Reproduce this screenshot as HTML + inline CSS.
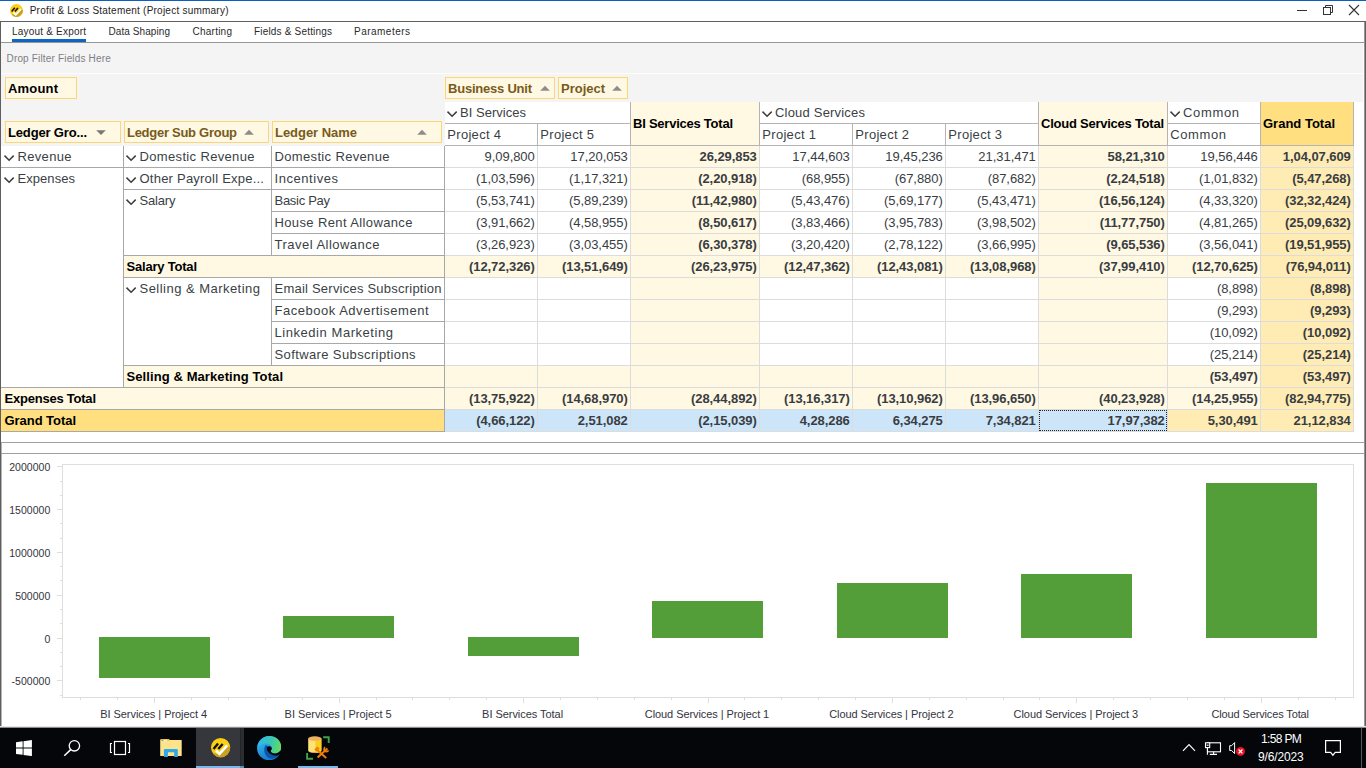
<!DOCTYPE html>
<html><head><meta charset="utf-8"><title>Profit &amp; Loss Statement</title>
<style>
html,body{margin:0;padding:0}
body{width:1366px;height:768px;overflow:hidden;position:relative;background:#fff;font-family:"Liberation Sans", sans-serif;}
div,span,svg{position:absolute;white-space:pre}
</style></head><body>
<div style="left:0px;top:0px;width:1366px;height:1px;background:#0b60bd;"></div>
<div style="left:0px;top:1px;width:1366px;height:20px;background:#fff;"></div>
<div style="left:0px;top:21px;width:1366px;height:1px;background:#5f5f5f;"></div>
<div style="left:0px;top:21px;width:1px;height:707px;background:#5f5f5f;"></div>
<div style="left:1365px;top:21px;width:1px;height:707px;background:#5f5f5f;"></div>
<div style="left:1364px;top:22px;width:1px;height:706px;background:#969696;"></div>
<div style="left:1px;top:43px;width:1px;height:684px;background:#b4b4b4;"></div>
<svg style="left:8.7px;top:2.5px" width="15.0" height="15.0" viewBox="0 0 15.0 15.0"><defs><clipPath id="c16"><circle cx="7.5" cy="7.5" r="6.5"/></clipPath></defs><circle cx="7.5" cy="7.5" r="6.5" fill="#fccf14"/><path clip-path="url(#c16)" d="M6.6 12.35L12.2 6.35L15.3 7.75L13.3 15.75L4.3 15.75L2.5 10.95z" fill="#c9a01f"/><path d="M4.4 9.45L6.8 11.75L12.0 6.05" stroke="#fff" stroke-width="1.8" fill="none"/><path d="M2.7 8.45L5.8 4.65M5.9 8.45L8.9 5.05" stroke="#151515" stroke-width="1.6" fill="none"/></svg>
<span style="top:4.54px;font-size:10px;line-height:12px;color:#1e1e1e;letter-spacing:0.232px;left:29.7px;">Profit &amp; Loss Statement (Project summary)</span>
<div style="left:1297px;top:10px;width:10px;height:1px;background:#333;"></div>
<svg style="left:1320px;top:3px" width="16" height="14" viewBox="0 0 16 14"><path d="M5.5 4.5V2.5H12.5V9.5H10.5" fill="none" stroke="#333" stroke-width="1"/><rect x="3.5" y="4.5" width="7" height="7" fill="none" stroke="#333" stroke-width="1"/></svg>
<svg style="left:1348px;top:4px" width="12" height="12" viewBox="0 0 12 12"><path d="M1 1L11 11M11 1L1 11" stroke="#333" stroke-width="1.1" fill="none"/></svg>
<span style="top:25.54px;font-size:10px;line-height:12px;color:#2a2a2a;letter-spacing:0.203px;left:12px;">Layout &amp; Export</span>
<span style="top:25.54px;font-size:10px;line-height:12px;color:#2a2a2a;letter-spacing:0.081px;left:108.5px;">Data Shaping</span>
<span style="top:25.54px;font-size:10px;line-height:12px;color:#2a2a2a;letter-spacing:0.241px;left:192.5px;">Charting</span>
<span style="top:25.54px;font-size:10px;line-height:12px;color:#2a2a2a;letter-spacing:0.185px;left:254px;">Fields &amp; Settings</span>
<span style="top:25.54px;font-size:10px;line-height:12px;color:#2a2a2a;letter-spacing:0.479px;left:354px;">Parameters</span>
<div style="left:12px;top:39px;width:74px;height:3px;background:#0c66c2;"></div>
<div style="left:1px;top:42px;width:1363px;height:1px;background:#969696;"></div>
<div style="left:1px;top:43px;width:1363px;height:103px;background:#f4f4f4;"></div>
<div style="left:1px;top:73px;width:1363px;height:1px;background:#fdfdfd;"></div>
<div style="left:1363px;top:43px;width:1px;height:103px;background:#fff;"></div>
<span style="top:52.53px;font-size:10px;line-height:12px;color:#7e7e86;letter-spacing:0.168px;left:6.5px;">Drop Filter Fields Here</span>
<div style="left:5px;top:77px;width:72px;height:22px;background:#fff8e3;box-sizing:border-box;border:1px solid #fcd675;"></div>
<span style="top:80.5px;font-size:13px;line-height:16px;color:#000;font-weight:700;letter-spacing:0.178px;left:8px;">Amount</span>
<div style="left:445px;top:77px;width:110px;height:22px;background:#fff8e3;box-sizing:border-box;border:1px solid #fcd675;"></div>
<span style="top:80.5px;font-size:13px;line-height:16px;color:#785b1c;font-weight:700;letter-spacing:-0.224px;left:448px;">Business Unit</span>
<svg style="left:539.7px;top:85px" width="10" height="7" viewBox="0 0 10 7"><path d="M0.2 5.7L5 0.8L9.8 5.7z" fill="#8c8c8c"/></svg>
<div style="left:558px;top:77px;width:70px;height:22px;background:#fff8e3;box-sizing:border-box;border:1px solid #fcd675;"></div>
<span style="top:80.5px;font-size:13px;line-height:16px;color:#785b1c;font-weight:700;letter-spacing:-0.013px;left:561px;">Project</span>
<svg style="left:612px;top:85px" width="10" height="7" viewBox="0 0 10 7"><path d="M0.2 5.7L5 0.8L9.8 5.7z" fill="#8c8c8c"/></svg>
<div style="left:5px;top:121px;width:116px;height:22px;background:#fff8e3;box-sizing:border-box;border:1px solid #fcd675;"></div>
<span style="top:124.5px;font-size:13px;line-height:16px;color:#000;font-weight:700;letter-spacing:-0.159px;left:8px;">Ledger Gro...</span>
<svg style="left:96px;top:129px" width="10" height="7" viewBox="0 0 10 7"><path d="M0.2 1.2L5 6.1L9.8 1.2z" fill="#787878"/></svg>
<div style="left:124px;top:121px;width:145px;height:22px;background:#fff8e3;box-sizing:border-box;border:1px solid #fcd675;"></div>
<span style="top:124.5px;font-size:13px;line-height:16px;color:#785b1c;font-weight:700;letter-spacing:-0.275px;left:127px;">Ledger Sub Group</span>
<svg style="left:244px;top:129px" width="10" height="7" viewBox="0 0 10 7"><path d="M0.2 5.7L5 0.8L9.8 5.7z" fill="#8c8c8c"/></svg>
<div style="left:272px;top:121px;width:170px;height:22px;background:#fff8e3;box-sizing:border-box;border:1px solid #fcd675;"></div>
<span style="top:124.5px;font-size:13px;line-height:16px;color:#785b1c;font-weight:700;letter-spacing:-0.037px;left:275px;">Ledger Name</span>
<svg style="left:417px;top:129px" width="10" height="7" viewBox="0 0 10 7"><path d="M0.2 5.7L5 0.8L9.8 5.7z" fill="#8c8c8c"/></svg>
<div style="left:445px;top:102px;width:909px;height:44px;background:#fff;"></div>
<div style="left:1px;top:146px;width:1353px;height:286px;background:#fff;"></div>
<div style="left:1354px;top:102px;width:10px;height:330px;background:#fff;"></div>
<div style="left:1px;top:432px;width:1363px;height:10px;background:#fff;"></div>
<div style="left:631px;top:102px;width:128px;height:43px;background:#fff8e3;"></div>
<span style="top:115.5px;font-size:13px;line-height:16px;color:#000;font-weight:700;letter-spacing:-0.238px;left:633px;">BI Services Total</span>
<div style="left:1039px;top:102px;width:128px;height:43px;background:#fff8e3;"></div>
<span style="top:115.5px;font-size:13px;line-height:16px;color:#000;font-weight:700;letter-spacing:-0.244px;left:1041px;">Cloud Services Total</span>
<div style="left:1261px;top:102px;width:92px;height:43px;background:#ffdf80;"></div>
<span style="top:115.5px;font-size:13px;line-height:16px;color:#000;font-weight:700;letter-spacing:0.002px;left:1263px;">Grand Total</span>
<svg style="left:445.7px;top:110px" width="12" height="8" viewBox="0 0 12 8"><path d="M1.5 1.6L6.1 6.2L10.7 1.6" fill="none" stroke="#3c3c3c" stroke-width="1.5"/></svg>
<span style="top:104.5px;font-size:13px;line-height:16px;color:#3a3f45;letter-spacing:0.025px;left:460px;">BI Services</span>
<svg style="left:760.7px;top:110px" width="12" height="8" viewBox="0 0 12 8"><path d="M1.5 1.6L6.1 6.2L10.7 1.6" fill="none" stroke="#3c3c3c" stroke-width="1.5"/></svg>
<span style="top:104.5px;font-size:13px;line-height:16px;color:#3a3f45;letter-spacing:0.197px;left:775px;">Cloud Services</span>
<svg style="left:1168.7px;top:110px" width="12" height="8" viewBox="0 0 12 8"><path d="M1.5 1.6L6.1 6.2L10.7 1.6" fill="none" stroke="#3c3c3c" stroke-width="1.5"/></svg>
<span style="top:104.5px;font-size:13px;line-height:16px;color:#3a3f45;letter-spacing:0.65px;left:1183px;">Common</span>
<span style="top:126.5px;font-size:13px;line-height:16px;color:#3a3f45;letter-spacing:0.298px;left:447.3px;">Project 4</span>
<span style="top:126.5px;font-size:13px;line-height:16px;color:#3a3f45;letter-spacing:0.298px;left:540.3px;">Project 5</span>
<span style="top:126.5px;font-size:13px;line-height:16px;color:#3a3f45;letter-spacing:0.298px;left:762.3px;">Project 1</span>
<span style="top:126.5px;font-size:13px;line-height:16px;color:#3a3f45;letter-spacing:0.298px;left:855.3px;">Project 2</span>
<span style="top:126.5px;font-size:13px;line-height:16px;color:#3a3f45;letter-spacing:0.298px;left:948.3px;">Project 3</span>
<span style="top:126.5px;font-size:13px;line-height:16px;color:#3a3f45;letter-spacing:0.59px;left:1170.3px;">Common</span>
<div style="left:445px;top:123px;width:185px;height:1px;background:#b4b4b4;"></div>
<div style="left:760px;top:123px;width:278px;height:1px;background:#b4b4b4;"></div>
<div style="left:1168px;top:123px;width:92px;height:1px;background:#b4b4b4;"></div>
<div style="left:445px;top:145px;width:909px;height:1px;background:#b4b4b4;"></div>
<div style="left:537px;top:124px;width:1px;height:21px;background:#b4b4b4;"></div>
<div style="left:852px;top:124px;width:1px;height:21px;background:#b4b4b4;"></div>
<div style="left:945px;top:124px;width:1px;height:21px;background:#b4b4b4;"></div>
<div style="left:630px;top:102px;width:1px;height:44px;background:#b4b4b4;"></div>
<div style="left:759px;top:102px;width:1px;height:44px;background:#b4b4b4;"></div>
<div style="left:1038px;top:102px;width:1px;height:44px;background:#b4b4b4;"></div>
<div style="left:1167px;top:102px;width:1px;height:44px;background:#b4b4b4;"></div>
<div style="left:1260px;top:102px;width:1px;height:44px;background:#b4b4b4;"></div>
<div style="left:1353px;top:102px;width:1px;height:44px;background:#b4b4b4;"></div>
<span style="top:148.5px;font-size:13px;line-height:16px;color:#393d42;letter-spacing:-0.05px;right:831.25px;">9,09,800</span>
<span style="top:148.5px;font-size:13px;line-height:16px;color:#393d42;letter-spacing:-0.05px;right:738.25px;">17,20,053</span>
<div style="left:631px;top:146px;width:128px;height:21px;background:#fff8e3;"></div>
<span style="top:148.5px;font-size:13px;line-height:16px;color:#393d42;font-weight:700;letter-spacing:-0.07px;right:609.27px;">26,29,853</span>
<span style="top:148.5px;font-size:13px;line-height:16px;color:#393d42;letter-spacing:-0.05px;right:516.25px;">17,44,603</span>
<span style="top:148.5px;font-size:13px;line-height:16px;color:#393d42;letter-spacing:-0.05px;right:423.25px;">19,45,236</span>
<span style="top:148.5px;font-size:13px;line-height:16px;color:#393d42;letter-spacing:-0.05px;right:330.25px;">21,31,471</span>
<div style="left:1039px;top:146px;width:128px;height:21px;background:#fff8e3;"></div>
<span style="top:148.5px;font-size:13px;line-height:16px;color:#393d42;font-weight:700;letter-spacing:-0.07px;right:201.27px;">58,21,310</span>
<span style="top:148.5px;font-size:13px;line-height:16px;color:#393d42;letter-spacing:-0.05px;right:108.25px;">19,56,446</span>
<div style="left:1261px;top:146px;width:92px;height:21px;background:#ffecb5;"></div>
<span style="top:148.5px;font-size:13px;line-height:16px;color:#393d42;font-weight:700;letter-spacing:-0.07px;right:15.27px;">1,04,07,609</span>
<span style="top:170.5px;font-size:13px;line-height:16px;color:#393d42;letter-spacing:-0.05px;right:831.25px;">(1,03,596)</span>
<span style="top:170.5px;font-size:13px;line-height:16px;color:#393d42;letter-spacing:-0.05px;right:738.25px;">(1,17,321)</span>
<div style="left:631px;top:168px;width:128px;height:21px;background:#fff8e3;"></div>
<span style="top:170.5px;font-size:13px;line-height:16px;color:#393d42;font-weight:700;letter-spacing:-0.07px;right:609.27px;">(2,20,918)</span>
<span style="top:170.5px;font-size:13px;line-height:16px;color:#393d42;letter-spacing:-0.05px;right:516.25px;">(68,955)</span>
<span style="top:170.5px;font-size:13px;line-height:16px;color:#393d42;letter-spacing:-0.05px;right:423.25px;">(67,880)</span>
<span style="top:170.5px;font-size:13px;line-height:16px;color:#393d42;letter-spacing:-0.05px;right:330.25px;">(87,682)</span>
<div style="left:1039px;top:168px;width:128px;height:21px;background:#fff8e3;"></div>
<span style="top:170.5px;font-size:13px;line-height:16px;color:#393d42;font-weight:700;letter-spacing:-0.07px;right:201.27px;">(2,24,518)</span>
<span style="top:170.5px;font-size:13px;line-height:16px;color:#393d42;letter-spacing:-0.05px;right:108.25px;">(1,01,832)</span>
<div style="left:1261px;top:168px;width:92px;height:21px;background:#ffecb5;"></div>
<span style="top:170.5px;font-size:13px;line-height:16px;color:#393d42;font-weight:700;letter-spacing:-0.07px;right:15.27px;">(5,47,268)</span>
<span style="top:192.5px;font-size:13px;line-height:16px;color:#393d42;letter-spacing:-0.05px;right:831.25px;">(5,53,741)</span>
<span style="top:192.5px;font-size:13px;line-height:16px;color:#393d42;letter-spacing:-0.05px;right:738.25px;">(5,89,239)</span>
<div style="left:631px;top:190px;width:128px;height:21px;background:#fff8e3;"></div>
<span style="top:192.5px;font-size:13px;line-height:16px;color:#393d42;font-weight:700;letter-spacing:-0.07px;right:609.27px;">(11,42,980)</span>
<span style="top:192.5px;font-size:13px;line-height:16px;color:#393d42;letter-spacing:-0.05px;right:516.25px;">(5,43,476)</span>
<span style="top:192.5px;font-size:13px;line-height:16px;color:#393d42;letter-spacing:-0.05px;right:423.25px;">(5,69,177)</span>
<span style="top:192.5px;font-size:13px;line-height:16px;color:#393d42;letter-spacing:-0.05px;right:330.25px;">(5,43,471)</span>
<div style="left:1039px;top:190px;width:128px;height:21px;background:#fff8e3;"></div>
<span style="top:192.5px;font-size:13px;line-height:16px;color:#393d42;font-weight:700;letter-spacing:-0.07px;right:201.27px;">(16,56,124)</span>
<span style="top:192.5px;font-size:13px;line-height:16px;color:#393d42;letter-spacing:-0.05px;right:108.25px;">(4,33,320)</span>
<div style="left:1261px;top:190px;width:92px;height:21px;background:#ffecb5;"></div>
<span style="top:192.5px;font-size:13px;line-height:16px;color:#393d42;font-weight:700;letter-spacing:-0.07px;right:15.27px;">(32,32,424)</span>
<span style="top:214.5px;font-size:13px;line-height:16px;color:#393d42;letter-spacing:-0.05px;right:831.25px;">(3,91,662)</span>
<span style="top:214.5px;font-size:13px;line-height:16px;color:#393d42;letter-spacing:-0.05px;right:738.25px;">(4,58,955)</span>
<div style="left:631px;top:212px;width:128px;height:21px;background:#fff8e3;"></div>
<span style="top:214.5px;font-size:13px;line-height:16px;color:#393d42;font-weight:700;letter-spacing:-0.07px;right:609.27px;">(8,50,617)</span>
<span style="top:214.5px;font-size:13px;line-height:16px;color:#393d42;letter-spacing:-0.05px;right:516.25px;">(3,83,466)</span>
<span style="top:214.5px;font-size:13px;line-height:16px;color:#393d42;letter-spacing:-0.05px;right:423.25px;">(3,95,783)</span>
<span style="top:214.5px;font-size:13px;line-height:16px;color:#393d42;letter-spacing:-0.05px;right:330.25px;">(3,98,502)</span>
<div style="left:1039px;top:212px;width:128px;height:21px;background:#fff8e3;"></div>
<span style="top:214.5px;font-size:13px;line-height:16px;color:#393d42;font-weight:700;letter-spacing:-0.07px;right:201.27px;">(11,77,750)</span>
<span style="top:214.5px;font-size:13px;line-height:16px;color:#393d42;letter-spacing:-0.05px;right:108.25px;">(4,81,265)</span>
<div style="left:1261px;top:212px;width:92px;height:21px;background:#ffecb5;"></div>
<span style="top:214.5px;font-size:13px;line-height:16px;color:#393d42;font-weight:700;letter-spacing:-0.07px;right:15.27px;">(25,09,632)</span>
<span style="top:236.5px;font-size:13px;line-height:16px;color:#393d42;letter-spacing:-0.05px;right:831.25px;">(3,26,923)</span>
<span style="top:236.5px;font-size:13px;line-height:16px;color:#393d42;letter-spacing:-0.05px;right:738.25px;">(3,03,455)</span>
<div style="left:631px;top:234px;width:128px;height:21px;background:#fff8e3;"></div>
<span style="top:236.5px;font-size:13px;line-height:16px;color:#393d42;font-weight:700;letter-spacing:-0.07px;right:609.27px;">(6,30,378)</span>
<span style="top:236.5px;font-size:13px;line-height:16px;color:#393d42;letter-spacing:-0.05px;right:516.25px;">(3,20,420)</span>
<span style="top:236.5px;font-size:13px;line-height:16px;color:#393d42;letter-spacing:-0.05px;right:423.25px;">(2,78,122)</span>
<span style="top:236.5px;font-size:13px;line-height:16px;color:#393d42;letter-spacing:-0.05px;right:330.25px;">(3,66,995)</span>
<div style="left:1039px;top:234px;width:128px;height:21px;background:#fff8e3;"></div>
<span style="top:236.5px;font-size:13px;line-height:16px;color:#393d42;font-weight:700;letter-spacing:-0.07px;right:201.27px;">(9,65,536)</span>
<span style="top:236.5px;font-size:13px;line-height:16px;color:#393d42;letter-spacing:-0.05px;right:108.25px;">(3,56,041)</span>
<div style="left:1261px;top:234px;width:92px;height:21px;background:#ffecb5;"></div>
<span style="top:236.5px;font-size:13px;line-height:16px;color:#393d42;font-weight:700;letter-spacing:-0.07px;right:15.27px;">(19,51,955)</span>
<div style="left:445px;top:256px;width:92px;height:21px;background:#fff8e3;"></div>
<span style="top:258.5px;font-size:13px;line-height:16px;color:#393d42;font-weight:700;letter-spacing:-0.07px;right:831.27px;">(12,72,326)</span>
<div style="left:538px;top:256px;width:92px;height:21px;background:#fff8e3;"></div>
<span style="top:258.5px;font-size:13px;line-height:16px;color:#393d42;font-weight:700;letter-spacing:-0.07px;right:738.27px;">(13,51,649)</span>
<div style="left:631px;top:256px;width:128px;height:21px;background:#fff8e3;"></div>
<span style="top:258.5px;font-size:13px;line-height:16px;color:#393d42;font-weight:700;letter-spacing:-0.07px;right:609.27px;">(26,23,975)</span>
<div style="left:760px;top:256px;width:92px;height:21px;background:#fff8e3;"></div>
<span style="top:258.5px;font-size:13px;line-height:16px;color:#393d42;font-weight:700;letter-spacing:-0.07px;right:516.27px;">(12,47,362)</span>
<div style="left:853px;top:256px;width:92px;height:21px;background:#fff8e3;"></div>
<span style="top:258.5px;font-size:13px;line-height:16px;color:#393d42;font-weight:700;letter-spacing:-0.07px;right:423.27px;">(12,43,081)</span>
<div style="left:946px;top:256px;width:92px;height:21px;background:#fff8e3;"></div>
<span style="top:258.5px;font-size:13px;line-height:16px;color:#393d42;font-weight:700;letter-spacing:-0.07px;right:330.27px;">(13,08,968)</span>
<div style="left:1039px;top:256px;width:128px;height:21px;background:#fff8e3;"></div>
<span style="top:258.5px;font-size:13px;line-height:16px;color:#393d42;font-weight:700;letter-spacing:-0.07px;right:201.27px;">(37,99,410)</span>
<div style="left:1168px;top:256px;width:92px;height:21px;background:#fff8e3;"></div>
<span style="top:258.5px;font-size:13px;line-height:16px;color:#393d42;font-weight:700;letter-spacing:-0.07px;right:108.27px;">(12,70,625)</span>
<div style="left:1261px;top:256px;width:92px;height:21px;background:#ffecb5;"></div>
<span style="top:258.5px;font-size:13px;line-height:16px;color:#393d42;font-weight:700;letter-spacing:-0.07px;right:15.27px;">(76,94,011)</span>
<div style="left:631px;top:278px;width:128px;height:21px;background:#fff8e3;"></div>
<div style="left:1039px;top:278px;width:128px;height:21px;background:#fff8e3;"></div>
<span style="top:280.5px;font-size:13px;line-height:16px;color:#393d42;letter-spacing:-0.05px;right:108.25px;">(8,898)</span>
<div style="left:1261px;top:278px;width:92px;height:21px;background:#ffecb5;"></div>
<span style="top:280.5px;font-size:13px;line-height:16px;color:#393d42;font-weight:700;letter-spacing:-0.07px;right:15.27px;">(8,898)</span>
<div style="left:631px;top:300px;width:128px;height:21px;background:#fff8e3;"></div>
<div style="left:1039px;top:300px;width:128px;height:21px;background:#fff8e3;"></div>
<span style="top:302.5px;font-size:13px;line-height:16px;color:#393d42;letter-spacing:-0.05px;right:108.25px;">(9,293)</span>
<div style="left:1261px;top:300px;width:92px;height:21px;background:#ffecb5;"></div>
<span style="top:302.5px;font-size:13px;line-height:16px;color:#393d42;font-weight:700;letter-spacing:-0.07px;right:15.27px;">(9,293)</span>
<div style="left:631px;top:322px;width:128px;height:21px;background:#fff8e3;"></div>
<div style="left:1039px;top:322px;width:128px;height:21px;background:#fff8e3;"></div>
<span style="top:324.5px;font-size:13px;line-height:16px;color:#393d42;letter-spacing:-0.05px;right:108.25px;">(10,092)</span>
<div style="left:1261px;top:322px;width:92px;height:21px;background:#ffecb5;"></div>
<span style="top:324.5px;font-size:13px;line-height:16px;color:#393d42;font-weight:700;letter-spacing:-0.07px;right:15.27px;">(10,092)</span>
<div style="left:631px;top:344px;width:128px;height:21px;background:#fff8e3;"></div>
<div style="left:1039px;top:344px;width:128px;height:21px;background:#fff8e3;"></div>
<span style="top:346.5px;font-size:13px;line-height:16px;color:#393d42;letter-spacing:-0.05px;right:108.25px;">(25,214)</span>
<div style="left:1261px;top:344px;width:92px;height:21px;background:#ffecb5;"></div>
<span style="top:346.5px;font-size:13px;line-height:16px;color:#393d42;font-weight:700;letter-spacing:-0.07px;right:15.27px;">(25,214)</span>
<div style="left:445px;top:366px;width:92px;height:21px;background:#fff8e3;"></div>
<div style="left:538px;top:366px;width:92px;height:21px;background:#fff8e3;"></div>
<div style="left:631px;top:366px;width:128px;height:21px;background:#fff8e3;"></div>
<div style="left:760px;top:366px;width:92px;height:21px;background:#fff8e3;"></div>
<div style="left:853px;top:366px;width:92px;height:21px;background:#fff8e3;"></div>
<div style="left:946px;top:366px;width:92px;height:21px;background:#fff8e3;"></div>
<div style="left:1039px;top:366px;width:128px;height:21px;background:#fff8e3;"></div>
<div style="left:1168px;top:366px;width:92px;height:21px;background:#fff8e3;"></div>
<span style="top:368.5px;font-size:13px;line-height:16px;color:#393d42;font-weight:700;letter-spacing:-0.07px;right:108.27px;">(53,497)</span>
<div style="left:1261px;top:366px;width:92px;height:21px;background:#ffecb5;"></div>
<span style="top:368.5px;font-size:13px;line-height:16px;color:#393d42;font-weight:700;letter-spacing:-0.07px;right:15.27px;">(53,497)</span>
<div style="left:445px;top:388px;width:92px;height:21px;background:#fff8e3;"></div>
<span style="top:390.5px;font-size:13px;line-height:16px;color:#393d42;font-weight:700;letter-spacing:-0.07px;right:831.27px;">(13,75,922)</span>
<div style="left:538px;top:388px;width:92px;height:21px;background:#fff8e3;"></div>
<span style="top:390.5px;font-size:13px;line-height:16px;color:#393d42;font-weight:700;letter-spacing:-0.07px;right:738.27px;">(14,68,970)</span>
<div style="left:631px;top:388px;width:128px;height:21px;background:#fff8e3;"></div>
<span style="top:390.5px;font-size:13px;line-height:16px;color:#393d42;font-weight:700;letter-spacing:-0.07px;right:609.27px;">(28,44,892)</span>
<div style="left:760px;top:388px;width:92px;height:21px;background:#fff8e3;"></div>
<span style="top:390.5px;font-size:13px;line-height:16px;color:#393d42;font-weight:700;letter-spacing:-0.07px;right:516.27px;">(13,16,317)</span>
<div style="left:853px;top:388px;width:92px;height:21px;background:#fff8e3;"></div>
<span style="top:390.5px;font-size:13px;line-height:16px;color:#393d42;font-weight:700;letter-spacing:-0.07px;right:423.27px;">(13,10,962)</span>
<div style="left:946px;top:388px;width:92px;height:21px;background:#fff8e3;"></div>
<span style="top:390.5px;font-size:13px;line-height:16px;color:#393d42;font-weight:700;letter-spacing:-0.07px;right:330.27px;">(13,96,650)</span>
<div style="left:1039px;top:388px;width:128px;height:21px;background:#fff8e3;"></div>
<span style="top:390.5px;font-size:13px;line-height:16px;color:#393d42;font-weight:700;letter-spacing:-0.07px;right:201.27px;">(40,23,928)</span>
<div style="left:1168px;top:388px;width:92px;height:21px;background:#fff8e3;"></div>
<span style="top:390.5px;font-size:13px;line-height:16px;color:#393d42;font-weight:700;letter-spacing:-0.07px;right:108.27px;">(14,25,955)</span>
<div style="left:1261px;top:388px;width:92px;height:21px;background:#ffecb5;"></div>
<span style="top:390.5px;font-size:13px;line-height:16px;color:#393d42;font-weight:700;letter-spacing:-0.07px;right:15.27px;">(82,94,775)</span>
<div style="left:445px;top:410px;width:92px;height:21px;background:#cde5f8;"></div>
<span style="top:412.5px;font-size:13px;line-height:16px;color:#393d42;font-weight:700;letter-spacing:-0.07px;right:831.27px;">(4,66,122)</span>
<div style="left:538px;top:410px;width:92px;height:21px;background:#cde5f8;"></div>
<span style="top:412.5px;font-size:13px;line-height:16px;color:#393d42;font-weight:700;letter-spacing:-0.07px;right:738.27px;">2,51,082</span>
<div style="left:631px;top:410px;width:128px;height:21px;background:#cde5f8;"></div>
<span style="top:412.5px;font-size:13px;line-height:16px;color:#393d42;font-weight:700;letter-spacing:-0.07px;right:609.27px;">(2,15,039)</span>
<div style="left:760px;top:410px;width:92px;height:21px;background:#cde5f8;"></div>
<span style="top:412.5px;font-size:13px;line-height:16px;color:#393d42;font-weight:700;letter-spacing:-0.07px;right:516.27px;">4,28,286</span>
<div style="left:853px;top:410px;width:92px;height:21px;background:#cde5f8;"></div>
<span style="top:412.5px;font-size:13px;line-height:16px;color:#393d42;font-weight:700;letter-spacing:-0.07px;right:423.27px;">6,34,275</span>
<div style="left:946px;top:410px;width:92px;height:21px;background:#cde5f8;"></div>
<span style="top:412.5px;font-size:13px;line-height:16px;color:#393d42;font-weight:700;letter-spacing:-0.07px;right:330.27px;">7,34,821</span>
<div style="left:1039px;top:410px;width:128px;height:21px;background:#cde5f8;"></div>
<span style="top:412.5px;font-size:13px;line-height:16px;color:#393d42;font-weight:700;letter-spacing:-0.07px;right:201.27px;">17,97,382</span>
<div style="left:1168px;top:410px;width:92px;height:21px;background:#ffecb5;"></div>
<span style="top:412.5px;font-size:13px;line-height:16px;color:#393d42;font-weight:700;letter-spacing:-0.07px;right:108.27px;">5,30,491</span>
<div style="left:1261px;top:410px;width:92px;height:21px;background:#ffecb5;"></div>
<span style="top:412.5px;font-size:13px;line-height:16px;color:#393d42;font-weight:700;letter-spacing:-0.07px;right:15.27px;">21,12,834</span>
<div style="left:445px;top:167px;width:909px;height:1px;background:#dcdcdc;"></div>
<div style="left:445px;top:189px;width:909px;height:1px;background:#dcdcdc;"></div>
<div style="left:445px;top:211px;width:909px;height:1px;background:#dcdcdc;"></div>
<div style="left:445px;top:233px;width:909px;height:1px;background:#dcdcdc;"></div>
<div style="left:445px;top:255px;width:909px;height:1px;background:#dcdcdc;"></div>
<div style="left:445px;top:277px;width:909px;height:1px;background:#dcdcdc;"></div>
<div style="left:445px;top:299px;width:909px;height:1px;background:#dcdcdc;"></div>
<div style="left:445px;top:321px;width:909px;height:1px;background:#dcdcdc;"></div>
<div style="left:445px;top:343px;width:909px;height:1px;background:#dcdcdc;"></div>
<div style="left:445px;top:365px;width:909px;height:1px;background:#dcdcdc;"></div>
<div style="left:445px;top:387px;width:909px;height:1px;background:#dcdcdc;"></div>
<div style="left:445px;top:409px;width:909px;height:1px;background:#dcdcdc;"></div>
<div style="left:445px;top:431px;width:909px;height:1px;background:#dcdcdc;"></div>
<div style="left:537px;top:146px;width:1px;height:286px;background:#dcdcdc;"></div>
<div style="left:630px;top:146px;width:1px;height:286px;background:#dcdcdc;"></div>
<div style="left:759px;top:146px;width:1px;height:286px;background:#dcdcdc;"></div>
<div style="left:852px;top:146px;width:1px;height:286px;background:#dcdcdc;"></div>
<div style="left:945px;top:146px;width:1px;height:286px;background:#dcdcdc;"></div>
<div style="left:1038px;top:146px;width:1px;height:286px;background:#dcdcdc;"></div>
<div style="left:1167px;top:146px;width:1px;height:286px;background:#dcdcdc;"></div>
<div style="left:1260px;top:146px;width:1px;height:286px;background:#dcdcdc;"></div>
<div style="left:1353px;top:146px;width:1px;height:286px;background:#dcdcdc;"></div>
<div style="left:1039px;top:410px;width:128px;height:21px;box-sizing:border-box;border:1px dotted #222;"></div>
<div style="left:124px;top:256px;width:320px;height:21px;background:#fff8e3;"></div>
<div style="left:124px;top:366px;width:320px;height:21px;background:#fff8e3;"></div>
<div style="left:1px;top:388px;width:443px;height:21px;background:#fff8e3;"></div>
<div style="left:1px;top:410px;width:443px;height:21px;background:#ffdf80;"></div>
<div style="left:1px;top:167px;width:443px;height:1px;background:#a8a8a8;"></div>
<div style="left:124px;top:189px;width:320px;height:1px;background:#a8a8a8;"></div>
<div style="left:272px;top:211px;width:172px;height:1px;background:#a8a8a8;"></div>
<div style="left:272px;top:233px;width:172px;height:1px;background:#a8a8a8;"></div>
<div style="left:124px;top:255px;width:320px;height:1px;background:#a8a8a8;"></div>
<div style="left:124px;top:277px;width:320px;height:1px;background:#a8a8a8;"></div>
<div style="left:272px;top:299px;width:172px;height:1px;background:#a8a8a8;"></div>
<div style="left:272px;top:321px;width:172px;height:1px;background:#a8a8a8;"></div>
<div style="left:272px;top:343px;width:172px;height:1px;background:#a8a8a8;"></div>
<div style="left:124px;top:365px;width:320px;height:1px;background:#a8a8a8;"></div>
<div style="left:1px;top:387px;width:443px;height:1px;background:#a8a8a8;"></div>
<div style="left:1px;top:409px;width:443px;height:1px;background:#a8a8a8;"></div>
<div style="left:1px;top:431px;width:443px;height:1px;background:#a8a8a8;"></div>
<div style="left:123px;top:146px;width:1px;height:242px;background:#a8a8a8;"></div>
<div style="left:271px;top:146px;width:1px;height:110px;background:#a8a8a8;"></div>
<div style="left:271px;top:278px;width:1px;height:88px;background:#a8a8a8;"></div>
<div style="left:444px;top:146px;width:1px;height:286px;background:#a8a8a8;"></div>
<svg style="left:3px;top:154px" width="12" height="8" viewBox="0 0 12 8"><path d="M1.5 1.6L6.1 6.2L10.7 1.6" fill="none" stroke="#3c3c3c" stroke-width="1.5"/></svg>
<span style="top:148.5px;font-size:13px;line-height:16px;color:#3a3f45;letter-spacing:0.326px;left:17.5px;">Revenue</span>
<svg style="left:3px;top:176px" width="12" height="8" viewBox="0 0 12 8"><path d="M1.5 1.6L6.1 6.2L10.7 1.6" fill="none" stroke="#3c3c3c" stroke-width="1.5"/></svg>
<span style="top:170.5px;font-size:13px;line-height:16px;color:#3a3f45;letter-spacing:0.058px;left:17.5px;">Expenses</span>
<svg style="left:125px;top:154px" width="12" height="8" viewBox="0 0 12 8"><path d="M1.5 1.6L6.1 6.2L10.7 1.6" fill="none" stroke="#3c3c3c" stroke-width="1.5"/></svg>
<span style="top:148.5px;font-size:13px;line-height:16px;color:#3a3f45;letter-spacing:0.345px;left:139.5px;">Domestic Revenue</span>
<svg style="left:125px;top:176px" width="12" height="8" viewBox="0 0 12 8"><path d="M1.5 1.6L6.1 6.2L10.7 1.6" fill="none" stroke="#3c3c3c" stroke-width="1.5"/></svg>
<span style="top:170.5px;font-size:13px;line-height:16px;color:#3a3f45;letter-spacing:0.227px;left:139.5px;">Other Payroll Expe...</span>
<svg style="left:125px;top:198px" width="12" height="8" viewBox="0 0 12 8"><path d="M1.5 1.6L6.1 6.2L10.7 1.6" fill="none" stroke="#3c3c3c" stroke-width="1.5"/></svg>
<span style="top:192.5px;font-size:13px;line-height:16px;color:#3a3f45;letter-spacing:-0.172px;left:139.5px;">Salary</span>
<svg style="left:125px;top:286px" width="12" height="8" viewBox="0 0 12 8"><path d="M1.5 1.6L6.1 6.2L10.7 1.6" fill="none" stroke="#3c3c3c" stroke-width="1.5"/></svg>
<span style="top:280.5px;font-size:13px;line-height:16px;color:#3a3f45;letter-spacing:0.472px;left:139.5px;">Selling &amp; Marketing</span>
<span style="top:148.5px;font-size:13px;line-height:16px;color:#3a3f45;letter-spacing:0.345px;left:274.5px;">Domestic Revenue</span>
<span style="top:170.5px;font-size:13px;line-height:16px;color:#3a3f45;letter-spacing:0.55px;left:274.5px;">Incentives</span>
<span style="top:192.5px;font-size:13px;line-height:16px;color:#3a3f45;letter-spacing:-0.289px;left:274.5px;">Basic Pay</span>
<span style="top:214.5px;font-size:13px;line-height:16px;color:#3a3f45;letter-spacing:0.378px;left:274.5px;">House Rent Allowance</span>
<span style="top:236.5px;font-size:13px;line-height:16px;color:#3a3f45;letter-spacing:0.48px;left:274.5px;">Travel Allowance</span>
<span style="top:280.5px;font-size:13px;line-height:16px;color:#3a3f45;letter-spacing:0.226px;left:274.5px;">Email Services Subscription</span>
<span style="top:302.5px;font-size:13px;line-height:16px;color:#3a3f45;letter-spacing:0.52px;left:274.5px;">Facebook Advertisement</span>
<span style="top:324.5px;font-size:13px;line-height:16px;color:#3a3f45;letter-spacing:0.551px;left:274.5px;">Linkedin Marketing</span>
<span style="top:346.5px;font-size:13px;line-height:16px;color:#3a3f45;letter-spacing:0.383px;left:274.5px;">Software Subscriptions</span>
<span style="top:258.5px;font-size:13px;line-height:16px;color:#000;font-weight:700;letter-spacing:-0.203px;left:126.5px;">Salary Total</span>
<span style="top:368.5px;font-size:13px;line-height:16px;color:#000;font-weight:700;letter-spacing:0.09px;left:126.5px;">Selling &amp; Marketing Total</span>
<span style="top:390.5px;font-size:13px;line-height:16px;color:#000;font-weight:700;letter-spacing:-0.224px;left:4.5px;">Expenses Total</span>
<span style="top:412.5px;font-size:13px;line-height:16px;color:#000;font-weight:700;letter-spacing:-0.048px;left:4.5px;">Grand Total</span>
<div style="left:1px;top:442px;width:1363px;height:1px;background:#a0a0a0;"></div>
<div style="left:1px;top:453px;width:1363px;height:1px;background:#a0a0a0;"></div>
<div style="left:62px;top:464px;width:1292px;height:234px;box-sizing:border-box;border:1px solid #dedede;"></div>
<div style="left:57px;top:466px;width:5px;height:1px;background:#dedede;"></div>
<span style="top:461.16px;font-size:10.5px;line-height:13px;color:#33333d;letter-spacing:0.03px;right:1315.67px;">2000000</span>
<div style="left:57px;top:509px;width:5px;height:1px;background:#dedede;"></div>
<span style="top:504.16px;font-size:10.5px;line-height:13px;color:#33333d;letter-spacing:0.03px;right:1315.67px;">1500000</span>
<div style="left:57px;top:552px;width:5px;height:1px;background:#dedede;"></div>
<span style="top:547.16px;font-size:10.5px;line-height:13px;color:#33333d;letter-spacing:0.03px;right:1315.67px;">1000000</span>
<div style="left:57px;top:595px;width:5px;height:1px;background:#dedede;"></div>
<span style="top:590.16px;font-size:10.5px;line-height:13px;color:#33333d;letter-spacing:0.03px;right:1315.67px;">500000</span>
<div style="left:57px;top:638px;width:5px;height:1px;background:#dedede;"></div>
<span style="top:633.16px;font-size:10.5px;line-height:13px;color:#33333d;letter-spacing:0.03px;right:1315.67px;">0</span>
<div style="left:57px;top:680px;width:5px;height:1px;background:#dedede;"></div>
<span style="top:675.16px;font-size:10.5px;line-height:13px;color:#33333d;letter-spacing:0.03px;right:1315.67px;">-500000</span>
<div style="left:60px;top:481px;width:2px;height:1px;background:#dedede;"></div>
<div style="left:60px;top:495px;width:2px;height:1px;background:#dedede;"></div>
<div style="left:60px;top:523px;width:2px;height:1px;background:#dedede;"></div>
<div style="left:60px;top:538px;width:2px;height:1px;background:#dedede;"></div>
<div style="left:60px;top:566px;width:2px;height:1px;background:#dedede;"></div>
<div style="left:60px;top:580px;width:2px;height:1px;background:#dedede;"></div>
<div style="left:60px;top:609px;width:2px;height:1px;background:#dedede;"></div>
<div style="left:60px;top:623px;width:2px;height:1px;background:#dedede;"></div>
<div style="left:60px;top:652px;width:2px;height:1px;background:#dedede;"></div>
<div style="left:60px;top:666px;width:2px;height:1px;background:#dedede;"></div>
<div style="left:60px;top:695px;width:2px;height:1px;background:#dedede;"></div>
<div style="left:154px;top:698px;width:1px;height:5px;background:#dedede;"></div>
<div style="left:80px;top:698px;width:1px;height:2px;background:#dedede;"></div>
<div style="left:117px;top:698px;width:1px;height:2px;background:#dedede;"></div>
<div style="left:191px;top:698px;width:1px;height:2px;background:#dedede;"></div>
<div style="left:228px;top:698px;width:1px;height:2px;background:#dedede;"></div>
<div style="left:99.0px;top:637.2px;width:111px;height:40.4px;background:#549e39;"></div>
<span style="top:707.69px;font-size:11px;line-height:13px;color:#33333d;letter-spacing:-0.046px;left:100.2px;">BI Services | Project 4</span>
<div style="left:339px;top:698px;width:1px;height:5px;background:#dedede;"></div>
<div style="left:265px;top:698px;width:1px;height:2px;background:#dedede;"></div>
<div style="left:302px;top:698px;width:1px;height:2px;background:#dedede;"></div>
<div style="left:376px;top:698px;width:1px;height:2px;background:#dedede;"></div>
<div style="left:412px;top:698px;width:1px;height:2px;background:#dedede;"></div>
<div style="left:283.4px;top:615.8px;width:111px;height:22.0px;background:#549e39;"></div>
<span style="top:707.69px;font-size:11px;line-height:13px;color:#33333d;letter-spacing:-0.046px;left:284.6px;">BI Services | Project 5</span>
<div style="left:523px;top:698px;width:1px;height:5px;background:#dedede;"></div>
<div style="left:449px;top:698px;width:1px;height:2px;background:#dedede;"></div>
<div style="left:486px;top:698px;width:1px;height:2px;background:#dedede;"></div>
<div style="left:560px;top:698px;width:1px;height:2px;background:#dedede;"></div>
<div style="left:597px;top:698px;width:1px;height:2px;background:#dedede;"></div>
<div style="left:467.9px;top:637.2px;width:111px;height:18.9px;background:#549e39;"></div>
<span style="top:707.69px;font-size:11px;line-height:13px;color:#33333d;letter-spacing:-0.046px;left:482.1px;">BI Services Total</span>
<div style="left:708px;top:698px;width:1px;height:5px;background:#dedede;"></div>
<div style="left:634px;top:698px;width:1px;height:2px;background:#dedede;"></div>
<div style="left:671px;top:698px;width:1px;height:2px;background:#dedede;"></div>
<div style="left:744px;top:698px;width:1px;height:2px;background:#dedede;"></div>
<div style="left:781px;top:698px;width:1px;height:2px;background:#dedede;"></div>
<div style="left:652.3px;top:600.6px;width:111px;height:37.2px;background:#549e39;"></div>
<span style="top:707.69px;font-size:11px;line-height:13px;color:#33333d;letter-spacing:-0.078px;left:644.8px;">Cloud Services | Project 1</span>
<div style="left:892px;top:698px;width:1px;height:5px;background:#dedede;"></div>
<div style="left:818px;top:698px;width:1px;height:2px;background:#dedede;"></div>
<div style="left:855px;top:698px;width:1px;height:2px;background:#dedede;"></div>
<div style="left:929px;top:698px;width:1px;height:2px;background:#dedede;"></div>
<div style="left:966px;top:698px;width:1px;height:2px;background:#dedede;"></div>
<div style="left:836.7px;top:583.0px;width:111px;height:54.8px;background:#549e39;"></div>
<span style="top:707.69px;font-size:11px;line-height:13px;color:#33333d;letter-spacing:-0.074px;left:829.2px;">Cloud Services | Project 2</span>
<div style="left:1076px;top:698px;width:1px;height:5px;background:#dedede;"></div>
<div style="left:1003px;top:698px;width:1px;height:2px;background:#dedede;"></div>
<div style="left:1039px;top:698px;width:1px;height:2px;background:#dedede;"></div>
<div style="left:1113px;top:698px;width:1px;height:2px;background:#dedede;"></div>
<div style="left:1150px;top:698px;width:1px;height:2px;background:#dedede;"></div>
<div style="left:1021.2px;top:574.4px;width:111px;height:63.4px;background:#549e39;"></div>
<span style="top:707.69px;font-size:11px;line-height:13px;color:#33333d;letter-spacing:-0.074px;left:1013.6px;">Cloud Services | Project 3</span>
<div style="left:1261px;top:698px;width:1px;height:5px;background:#dedede;"></div>
<div style="left:1187px;top:698px;width:1px;height:2px;background:#dedede;"></div>
<div style="left:1224px;top:698px;width:1px;height:2px;background:#dedede;"></div>
<div style="left:1298px;top:698px;width:1px;height:2px;background:#dedede;"></div>
<div style="left:1335px;top:698px;width:1px;height:2px;background:#dedede;"></div>
<div style="left:1205.6px;top:483.4px;width:111px;height:154.4px;background:#549e39;"></div>
<span style="top:707.69px;font-size:11px;line-height:13px;color:#33333d;letter-spacing:-0.136px;left:1211.5px;">Cloud Services Total</span>
<div style="left:0px;top:728px;width:1366px;height:40px;background:#04060a;"></div>
<div style="left:0px;top:727px;width:1366px;height:1px;background:#8c8c8c;"></div>
<div style="left:0px;top:726px;width:1366px;height:1px;background:#e4e4e4;"></div>
<svg style="left:16px;top:740px" width="16.4" height="16.4" viewBox="0 0 17 17"><path d="M0 2.3L6.9 1.3V7.9H0zM7.8 1.2L16.5 0V7.9H7.8zM0 8.8H6.9V15.4L0 14.4zM7.8 8.8H16.5V16.7L7.8 15.5z" fill="#fff"/></svg>
<svg style="left:62px;top:738px" width="20" height="20" viewBox="0 0 20 20"><circle cx="12.4" cy="7.8" r="5.2" fill="none" stroke="#fff" stroke-width="1.3"/><path d="M8.7 11.6L2.3 17.8" stroke="#fff" stroke-width="1.5"/></svg>
<svg style="left:108px;top:739px" width="24" height="18" viewBox="0 0 24 18"><rect x="6.5" y="2.5" width="11" height="13" fill="none" stroke="#fff" stroke-width="1.2"/><path d="M4 4.5H2.5V13.5H4M20 4.5H21.5V13.5H20" fill="none" stroke="#fff" stroke-width="1.2"/></svg>
<svg style="left:160px;top:738px" width="23" height="20" viewBox="0 0 23 20"><path d="M0.2 2Q0.2 1 1.2 1H8.6Q9.4 1 9.8 2L10.2 2.6H0.2z" fill="#f3c344"/><rect x="0.2" y="2" width="21.5" height="16" rx="0.6" fill="#fce38c"/><rect x="0.2" y="2" width="9.6" height="0.9" fill="#f3c344"/><rect x="1.8" y="1.7" width="1.6" height="1.3" fill="#3fb4ec"/><rect x="3.6" y="1.9" width="3.4" height="1" fill="#fff7d8"/><path d="M3.9 19V12Q3.9 10.9 5 10.9H16.7Q17.8 10.9 17.8 12V19H14.2V14.2H7.9V19z" fill="#2fa9e6"/></svg>
<div style="left:196px;top:728px;width:44px;height:40px;background:#35373c;"></div>
<div style="left:240px;top:728px;width:1px;height:40px;background:#222428;"></div>
<div style="left:241px;top:728px;width:3px;height:40px;background:#2b2d31;"></div>
<div style="left:196px;top:766px;width:44px;height:2px;background:#76b9ed;"></div>
<div style="left:240px;top:766px;width:4px;height:2px;background:#5b8fb8;"></div>
<svg style="left:209.7px;top:737.1px" width="21.2" height="21.2" viewBox="0 0 21.2 21.2"><defs><clipPath id="c220"><circle cx="10.6" cy="10.6" r="9.6"/></clipPath></defs><circle cx="10.6" cy="10.6" r="9.6" fill="#fccf14"/><path clip-path="url(#c220)" d="M9.27 17.76L17.54 8.9L22.12 10.97L19.17 22.78L5.87 22.78L3.22 15.7z" fill="#c9a01f"/><path d="M6.02 13.48L9.57 16.88L17.25 8.46" stroke="#fff" stroke-width="2.66" fill="none"/><path d="M3.51 12.0L8.09 6.39M8.24 12.0L12.67 6.98" stroke="#151515" stroke-width="2.36" fill="none"/></svg>
<svg style="left:257px;top:735.8px" width="24.4" height="24.4" viewBox="0 0 24 24"><defs><linearGradient id="eg1" x1="0.2" y1="0.2" x2="0.6" y2="1"><stop offset="0" stop-color="#2fb5ea"/><stop offset="1" stop-color="#1573d0"/></linearGradient><linearGradient id="eg2" x1="0" y1="0.4" x2="1" y2="0.6"><stop offset="0" stop-color="#30b8ee"/><stop offset="0.55" stop-color="#3cc7b0"/><stop offset="1" stop-color="#63dc5c"/></linearGradient></defs><circle cx="12" cy="12" r="11.9" fill="url(#eg1)"/><path d="M8.4 9.2C6.6 11.8 6.6 16.6 9.4 19.9C12.4 23.3 18 23.1 22.4 18.2C20.6 19.6 17.5 20 15 18.8C11.5 17.1 10.2 13.6 11.6 11.2C10.8 9.8 9.6 9 8.4 9.2z" fill="#0d55a6"/><path d="M0.4 10.6C1.3 4.6 6.3 0.1 12.4 0.1C19.4 0.1 23.9 5.4 23.9 10.6C23.9 14.6 21.1 17.1 17.8 17.1C15 17.1 13.6 15.9 13.6 14.7C13.6 13.9 14.6 13.5 14.6 11.9C14.6 9.8 12.4 7.5 9.2 7.5C4.8 7.5 1.6 10.3 0.4 10.6z" fill="url(#eg2)"/><path d="M9.6 12.4C9.6 10.9 11 9.9 12.3 10.2C13.8 10.5 14.7 11.5 14.6 12.6C14.5 13.6 13.6 13.9 13.6 14.7C13.6 15.9 15 17.1 17.8 17.1C20 17.1 22 16 23.3 14L24.2 15.5C23.8 16.6 23.2 17.4 22.4 18.2C20.6 19.6 17.5 20 15 18.8C11.8 17.3 9.6 14.8 9.6 12.4z" fill="#05070b"/></svg>
<svg style="left:306px;top:735px" width="25" height="26" viewBox="0 0 25 26"><path d="M2.2 3.5V15.5C2.2 16.9 5 17.8 8.8 17.8S15.4 16.9 15.4 15.5V3.5z" fill="#fce277"/><path d="M9.4 5V17.8C12.6 17.7 15.4 16.9 15.4 15.5V3.5z" fill="#f9ce1d"/><ellipse cx="8.8" cy="3.6" rx="6.6" ry="2.3" fill="#f2b062"/><path d="M17.2 2.2H22.7V8M1.1 17.9V23.7H7" fill="none" stroke="#3fa24a" stroke-width="1.9"/><path d="M10.6 14.6L20.2 23M21.4 13.4L11.6 22.6" stroke="#f07d0a" stroke-width="2"/><path d="M8.3 14.6L11.4 11.4L13.6 13.4L10.6 16.4z" fill="#f07d0a"/><path d="M19.2 12.2a2.4 2.4 0 1 0 3.4 3.2" fill="none" stroke="#f07d0a" stroke-width="1.7"/></svg>
<div style="left:298px;top:766px;width:40px;height:2px;background:#76b9ed;"></div>
<svg style="left:1182px;top:743px" width="14" height="9" viewBox="0 0 14 9"><path d="M1 7.8L7 1.7L13 7.8" fill="none" stroke="#fff" stroke-width="1.2"/></svg>
<svg style="left:1204px;top:741px" width="19" height="16" viewBox="0 0 19 16"><rect x="3.5" y="1.8" width="13" height="9" fill="none" stroke="#fff" stroke-width="1.1"/><rect x="1.5" y="1.8" width="4.2" height="4.8" fill="#05070b" stroke="#fff" stroke-width="1.1"/><path d="M3.4 6.5V13.8M9.6 10.8V13.4M5.8 13.4H13" fill="none" stroke="#fff" stroke-width="1.1"/><path d="M2.6 3.6H4.6V4.8H2.6z" fill="#fff"/></svg>
<svg style="left:1227px;top:740px" width="20" height="18" viewBox="0 0 20 18"><path d="M2.7 5.7H4.6L7.6 2.6V13.6L4.6 10.5H2.7z" fill="none" stroke="#fff" stroke-width="1"/><circle cx="13.5" cy="11.4" r="4.5" fill="#e81123"/><path d="M11.6 9.5l3.8 3.8M15.4 9.5l-3.8 3.8" stroke="#fff" stroke-width="1.2"/></svg>
<span style="top:731.84px;font-size:12px;line-height:14px;color:#fff;letter-spacing:-0.651px;left:1261px;">1:58 PM</span>
<span style="top:749.84px;font-size:12px;line-height:14px;color:#fff;letter-spacing:-0.16px;left:1258px;">9/6/2023</span>
<svg style="left:1324px;top:739px" width="18" height="18" viewBox="0 0 18 18"><path d="M1.6 1.6H16.4V13.4H11.2L8.9 16.2L6.6 13.4H1.6z" fill="none" stroke="#fff" stroke-width="1.2"/></svg>
<div style="left:1361px;top:728px;width:1px;height:40px;background:#55575a;"></div>
</body></html>
